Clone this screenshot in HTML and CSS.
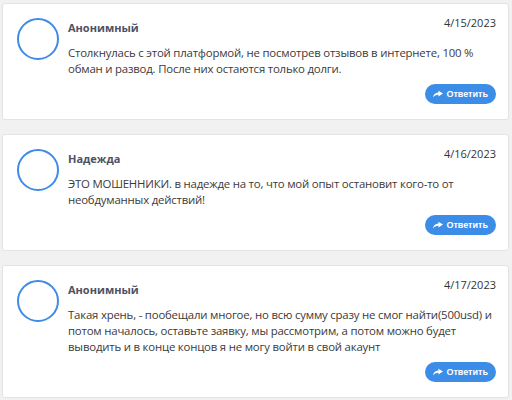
FILE: index.html
```html
<!DOCTYPE html>
<html lang="ru">
<head>
<meta charset="utf-8">
<link rel="stylesheet" href="styles.css">
</head>
<body>
<div class="list">
  <div class="card">
    <div class="avatar"></div>
    <div class="body">
      <div class="head"><span class="name">Анонимный</span><span class="date">4/15/2023</span></div>
      <p class="text">Столкнулась с этой платформой, не посмотрев отзывов в интернете, 100 % обман и развод. После них остаются только долги.</p>
      <div class="actions"><button class="reply"><svg class="ico" viewBox="0 0 12 9" width="10" height="8"><path d="M6.5 0.5 L12 4 L6.5 7.5 L6.5 5.4 C4 5.2 2 6.2 0 8.6 C0.5 5.2 2.6 3.2 6.5 2.8 Z" fill="#fff"/></svg>Ответить</button></div>
    </div>
  </div>
  <div class="card">
    <div class="avatar"></div>
    <div class="body">
      <div class="head"><span class="name">Надежда</span><span class="date">4/16/2023</span></div>
      <p class="text">ЭТО МОШЕННИКИ. в надежде на то, что мой опыт остановит кого-то от необдуманных действий!</p>
      <div class="actions"><button class="reply"><svg class="ico" viewBox="0 0 12 9" width="10" height="8"><path d="M6.5 0.5 L12 4 L6.5 7.5 L6.5 5.4 C4 5.2 2 6.2 0 8.6 C0.5 5.2 2.6 3.2 6.5 2.8 Z" fill="#fff"/></svg>Ответить</button></div>
    </div>
  </div>
  <div class="card">
    <div class="avatar"></div>
    <div class="body">
      <div class="head"><span class="name">Анонимный</span><span class="date">4/17/2023</span></div>
      <p class="text">Такая хрень, - пообещали многое, но всю сумму сразу не смог найти(500usd) и потом началось, оставьте заявку, мы рассмотрим, а потом можно будет выводить и в конце концов я не могу войти в свой акаунт</p>
      <div class="actions"><button class="reply"><svg class="ico" viewBox="0 0 12 9" width="10" height="8"><path d="M6.5 0.5 L12 4 L6.5 7.5 L6.5 5.4 C4 5.2 2 6.2 0 8.6 C0.5 5.2 2.6 3.2 6.5 2.8 Z" fill="#fff"/></svg>Ответить</button></div>
    </div>
  </div>
</div>
</body>
</html>
```
FILE: styles.css
```css
html, body {
  margin: 0;
  padding: 0;
  background: #f1f1f1;
}
body {
  font-family: "Open Sans", "Noto Sans", sans-serif;
  color: #333;
}
.list {
  display: flex;
  flex-direction: column;
  gap: 14px;
  padding: 3px 3px 0 2px;
}
.card {
  display: flex;
  gap: 9px;
  background: #fff;
  border: 1px solid #e3e3e3;
  border-radius: 3px;
  padding: 14px 12px 15px 14px;
}
.avatar {
  flex: none;
  width: 38px;
  height: 38px;
  border: 2px solid #3f8be6;
  border-radius: 50%;
}
.body {
  flex: 1;
  display: flex;
  flex-direction: column;
}
.head {
  display: flex;
  justify-content: space-between;
  align-items: flex-start;
  height: 20px;
}
.name {
  font-size: 11px;
  font-weight: 700;
  color: #4d5163;
  padding-top: 2px;
}
.date {
  font-size: 11px;
  color: #333;
  margin-top: -3px;
}
.text {
  margin: 7px 0 0 0;
  font-size: 11.4px;
  line-height: 16px;
  letter-spacing: -0.2px;
  color: #3a3a3a;
}
.actions {
  display: flex;
  justify-content: flex-end;
  margin-top: 7px;
}
.reply {
  display: flex;
  align-items: center;
  gap: 3px;
  height: 20px;
  padding: 0 8px 0 8px;
  border: none;
  border-radius: 10px;
  background: #3b8de8;
  color: #fff;
  font-family: "Liberation Sans", Arial, sans-serif;
  font-size: 9px;
  font-weight: 700;
}
.ico {
  display: block;
}
```
